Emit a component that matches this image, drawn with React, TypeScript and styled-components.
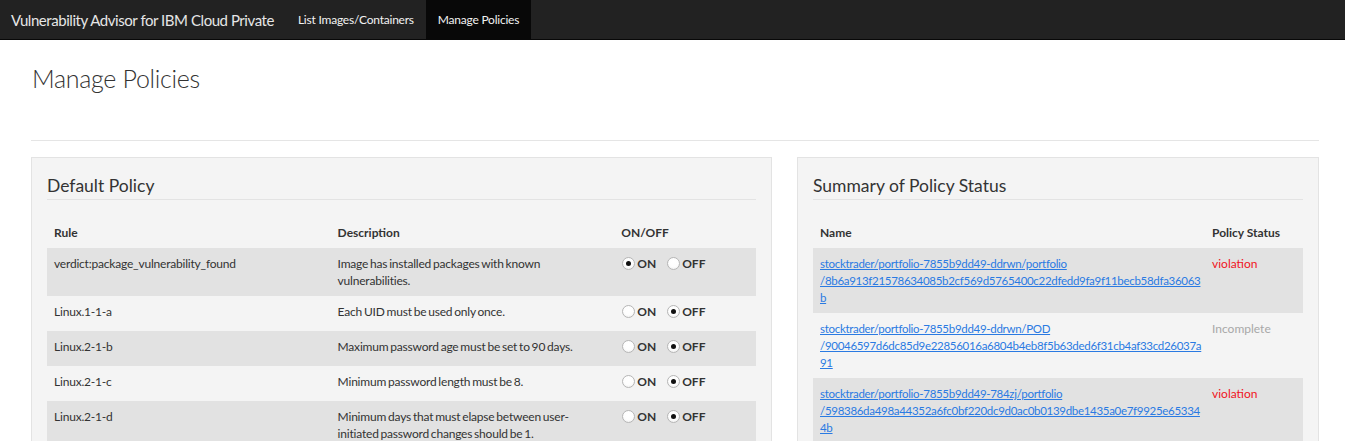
import React from "react";
import styled, { createGlobalStyle } from "styled-components";

const FONT = `Lato, "Noto Sans", "Liberation Sans", sans-serif`;

const GlobalStyle = createGlobalStyle`
  html, body { margin: 0; padding: 0; background: #fff; }
  body { font-family: ${FONT}; color: #333; font-size: 12px; }
  * { box-sizing: border-box; }
`;

const NavBar = styled.nav`
  display: flex;
  align-items: stretch;
  height: 40px;
  background: #222;
  border-bottom: 1px solid #080808;
`;

const Brand = styled.a`
  display: flex;
  align-items: center;
  padding: 0 12px 0 11px;
  font-size: 15px;
  letter-spacing: -0.45px;
  color: #e6e6e6;
  text-decoration: none;
  white-space: nowrap;
`;

const NavLink = styled.a<{ $active?: boolean }>`
  display: flex;
  align-items: center;
  padding: 0 12px;
  font-size: 12px;
  letter-spacing: -0.22px;
  color: #f2f2f2;
  text-decoration: none;
  white-space: nowrap;
  background: ${(p) => (p.$active ? "#080808" : "transparent")};
`;

const Main = styled.main`
  padding: 0 26px 0 31px;
`;

const PageHeader = styled.header`
  padding: 24px 0 47px;
  border-bottom: 1px solid #e5e5e5;
`;

const Title = styled.h1`
  margin: 0 0 0 1px;
  font-size: 25px;
  letter-spacing: -0.3px;
  line-height: 29px;
  font-weight: 300;
  color: #333;
`;

const Columns = styled.div`
  display: grid;
  grid-template-columns: 741px 1fr;
  gap: 25px;
  margin-top: 16px;
  align-items: start;
`;

const Panel = styled.section`
  background: #f4f4f4;
  border: 1px solid #e3e3e3;
  padding: 18px 15px 20px;
`;

const PanelTitle = styled.h2`
  margin: 0;
  padding-bottom: 3px;
  font-size: 17.5px;
  line-height: 20px;
  font-weight: 400;
  color: #333;
  border-bottom: 1px solid #e3e3e3;
`;

const Table = styled.table`
  width: 100%;
  margin-top: 18px;
  border-collapse: collapse;
  table-layout: fixed;
`;

const Th = styled.th<{ $w: string }>`
  width: ${(p) => p.$w};
  text-align: left;
  font-weight: 700;
  font-size: 12px;
  line-height: 17px;
  padding: 6px 7px 7px;
  color: #333;
`;

const Row = styled.tr<{ $odd: boolean }>`
  background: ${(p) => (p.$odd ? "#e2e2e2" : "transparent")};
`;

const Td = styled.td`
  vertical-align: top;
  font-size: 12px;
  line-height: 17px;
  letter-spacing: -0.2px;
  word-spacing: -1px;
  padding: 7px 7px;
  color: #333;
`;

const Toggle = styled.div`
  display: flex;
  height: 21px;
  align-items: flex-start;
  gap: 10px;
  letter-spacing: 0;
  word-spacing: 0;
`;

const Choice = styled.label`
  display: flex;
  align-items: flex-start;
  gap: 2px;
  font-weight: 700;
  font-size: 12px;
  line-height: 17px;
  color: #333;
`;

const Radio = styled.input.attrs({ type: "radio" })`
  appearance: none;
  margin: 2px 0 0 1px;
  width: 13px;
  height: 13px;
  border-radius: 50%;
  border: 1px solid #b5b5b5;
  background: radial-gradient(circle at 50% 35%, #fff 0%, #fdfdfd 55%, #e9e9e9 100%);
  display: grid;
  place-items: center;
  flex: none;
  &:checked::after {
    content: "";
    width: 5px;
    height: 5px;
    border-radius: 50%;
    background: #111;
  }
`;

const Link = styled.a`
  color: #2a7ae2;
  text-decoration: underline;
  font-size: 11.5px;
  letter-spacing: -0.3px;
  white-space: nowrap;
`;

const Status = styled.span<{ $kind: "violation" | "incomplete" }>`
  color: ${(p) => (p.$kind === "violation" ? "#f0141e" : "#a8a8a8")};
  letter-spacing: 0;
`;

const Lines = ({ lines }: { lines: string[] }) => (
  <>
    {lines.map((l, j) => (
      <React.Fragment key={j}>
        {j > 0 && <br />}
        {l}
      </React.Fragment>
    ))}
  </>
);

const rules = [
  { rule: "verdict:package_vulnerability_found", desc: ["Image has installed packages with known", "vulnerabilities."], on: true },
  { rule: "Linux.1-1-a", desc: ["Each UID must be used only once."], on: false },
  { rule: "Linux.2-1-b", desc: ["Maximum password age must be set to 90 days."], on: false },
  { rule: "Linux.2-1-c", desc: ["Minimum password length must be 8."], on: false },
  { rule: "Linux.2-1-d", desc: ["Minimum days that must elapse between user-", "initiated password changes should be 1."], on: false },
];

const statuses: { lines: string[]; status: "violation" | "incomplete" }[] = [
  {
    lines: [
      "stocktrader/portfolio-7855b9dd49-ddrwn/portfolio",
      "/8b6a913f21578634085b2cf569d5765400c22dfedd9fa9f11becb58dfa36063",
      "b",
    ],
    status: "violation",
  },
  {
    lines: [
      "stocktrader/portfolio-7855b9dd49-ddrwn/POD",
      "/90046597d6dc85d9e22856016a6804b4eb8f5b63ded6f31cb4af33cd26037a",
      "91",
    ],
    status: "incomplete",
  },
  {
    lines: [
      "stocktrader/portfolio-7855b9dd49-784zj/portfolio",
      "/598386da498a44352a6fc0bf220dc9d0ac0b0139dbe1435a0e7f9925e65334",
      "4b",
    ],
    status: "violation",
  },
];

export default function App() {
  return (
    <>
      <GlobalStyle />
      <NavBar>
        <Brand href="#">Vulnerability Advisor for IBM Cloud Private</Brand>
        <NavLink href="#">List Images/Containers</NavLink>
        <NavLink href="#" $active>Manage Policies</NavLink>
      </NavBar>
      <Main>
        <PageHeader>
          <Title>Manage Policies</Title>
        </PageHeader>
        <Columns>
          <Panel>
            <PanelTitle>Default Policy</PanelTitle>
            <Table>
              <thead>
                <tr>
                  <Th $w="40%">Rule</Th>
                  <Th $w="40%">Description</Th>
                  <Th $w="20%">ON/OFF</Th>
                </tr>
              </thead>
              <tbody>
                {rules.map((r, i) => (
                  <Row key={r.rule} $odd={i % 2 === 0}>
                    <Td>{r.rule}</Td>
                    <Td>
                      <Lines lines={r.desc} />
                    </Td>
                    <Td>
                      <Toggle>
                        <Choice>
                          <Radio name={r.rule} defaultChecked={r.on} />
                          ON
                        </Choice>
                        <Choice>
                          <Radio name={r.rule} defaultChecked={!r.on} />
                          OFF
                        </Choice>
                      </Toggle>
                    </Td>
                  </Row>
                ))}
              </tbody>
            </Table>
          </Panel>
          <Panel>
            <PanelTitle>Summary of Policy Status</PanelTitle>
            <Table>
              <thead>
                <tr>
                  <Th $w="80%">Name</Th>
                  <Th $w="20%">Policy Status</Th>
                </tr>
              </thead>
              <tbody>
                {statuses.map((s, i) => (
                  <Row key={s.lines[1]} $odd={i % 2 === 0}>
                    <Td>
                      <Link href="#">
                        <Lines lines={s.lines} />
                      </Link>
                    </Td>
                    <Td>
                      <Status $kind={s.status}>
                        {s.status === "violation" ? "violation" : "Incomplete"}
                      </Status>
                    </Td>
                  </Row>
                ))}
              </tbody>
            </Table>
          </Panel>
        </Columns>
      </Main>
    </>
  );
}
